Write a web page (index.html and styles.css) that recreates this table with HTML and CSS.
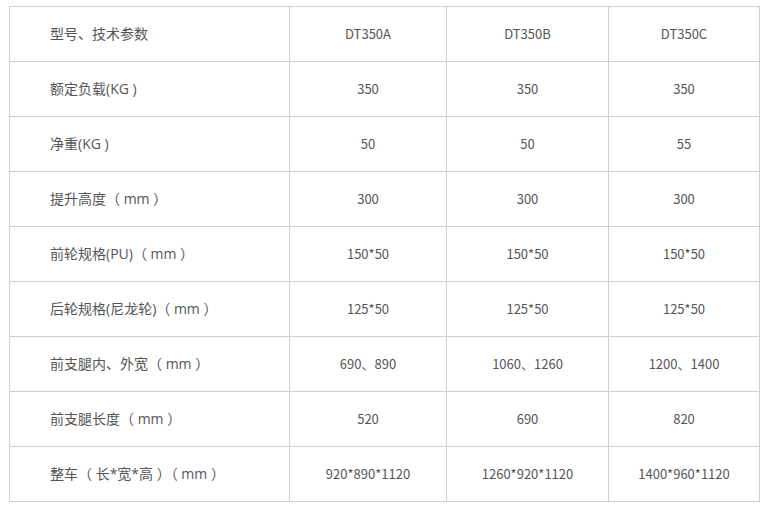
FILE: index.html
```html
<!DOCTYPE html>
<html lang="zh-CN">
<head>
<meta charset="utf-8">
<link rel="stylesheet" href="styles.css">
</head>
<body>
<table class="spec">
  <colgroup>
    <col class="c1"><col class="c2"><col class="c3"><col class="c4">
  </colgroup>
  <tbody>
    <tr><td class="label">型号、技术参数</td><td>DT350A</td><td>DT350B</td><td>DT350C</td></tr>
    <tr><td class="label">额定负载(KG )</td><td>350</td><td>350</td><td>350</td></tr>
    <tr><td class="label">净重(KG )</td><td>50</td><td>50</td><td>55</td></tr>
    <tr><td class="label">提升高度（ mm ）</td><td>300</td><td>300</td><td>300</td></tr>
    <tr><td class="label">前轮规格(PU)（ mm ）</td><td>150*50</td><td>150*50</td><td>150*50</td></tr>
    <tr><td class="label">后轮规格(尼龙轮)（ mm ）</td><td>125*50</td><td>125*50</td><td>125*50</td></tr>
    <tr><td class="label">前支腿内、外宽（ mm ）</td><td>690、890</td><td>1060、1260</td><td>1200、1400</td></tr>
    <tr><td class="label">前支腿长度（ mm ）</td><td>520</td><td>690</td><td>820</td></tr>
    <tr><td class="label">整车（ 长*宽*高 ）（ mm ）</td><td>920*890*1120</td><td>1260*920*1120</td><td>1400*960*1120</td></tr>
  </tbody>
</table>
</body>
</html>
```
FILE: styles.css
```css
html, body {
  margin: 0;
  padding: 0;
  background: #fff;
}
body {
  padding: 6px 9px;
  font-family: "Noto Sans CJK SC", "Noto Sans", sans-serif;
  font-size: 13px;
  color: #555;
}
.spec {
  border-collapse: collapse;
  table-layout: fixed;
  width: 750px;
}
.c1 { width: 280px; }
.c2 { width: 157px; }
.c3 { width: 162px; }
.c4 { width: 151px; }
.spec td {
  border: 1px solid #cfcfcf;
  height: 54px;
  padding: 0;
  text-align: center;
  vertical-align: middle;
  line-height: 20px;
}
.spec td.label {
  text-align: left;
  padding-left: 40px;
  font-size: 14px;
  font-family: "Open Sans", "Noto Sans CJK SC", sans-serif;
}
```
